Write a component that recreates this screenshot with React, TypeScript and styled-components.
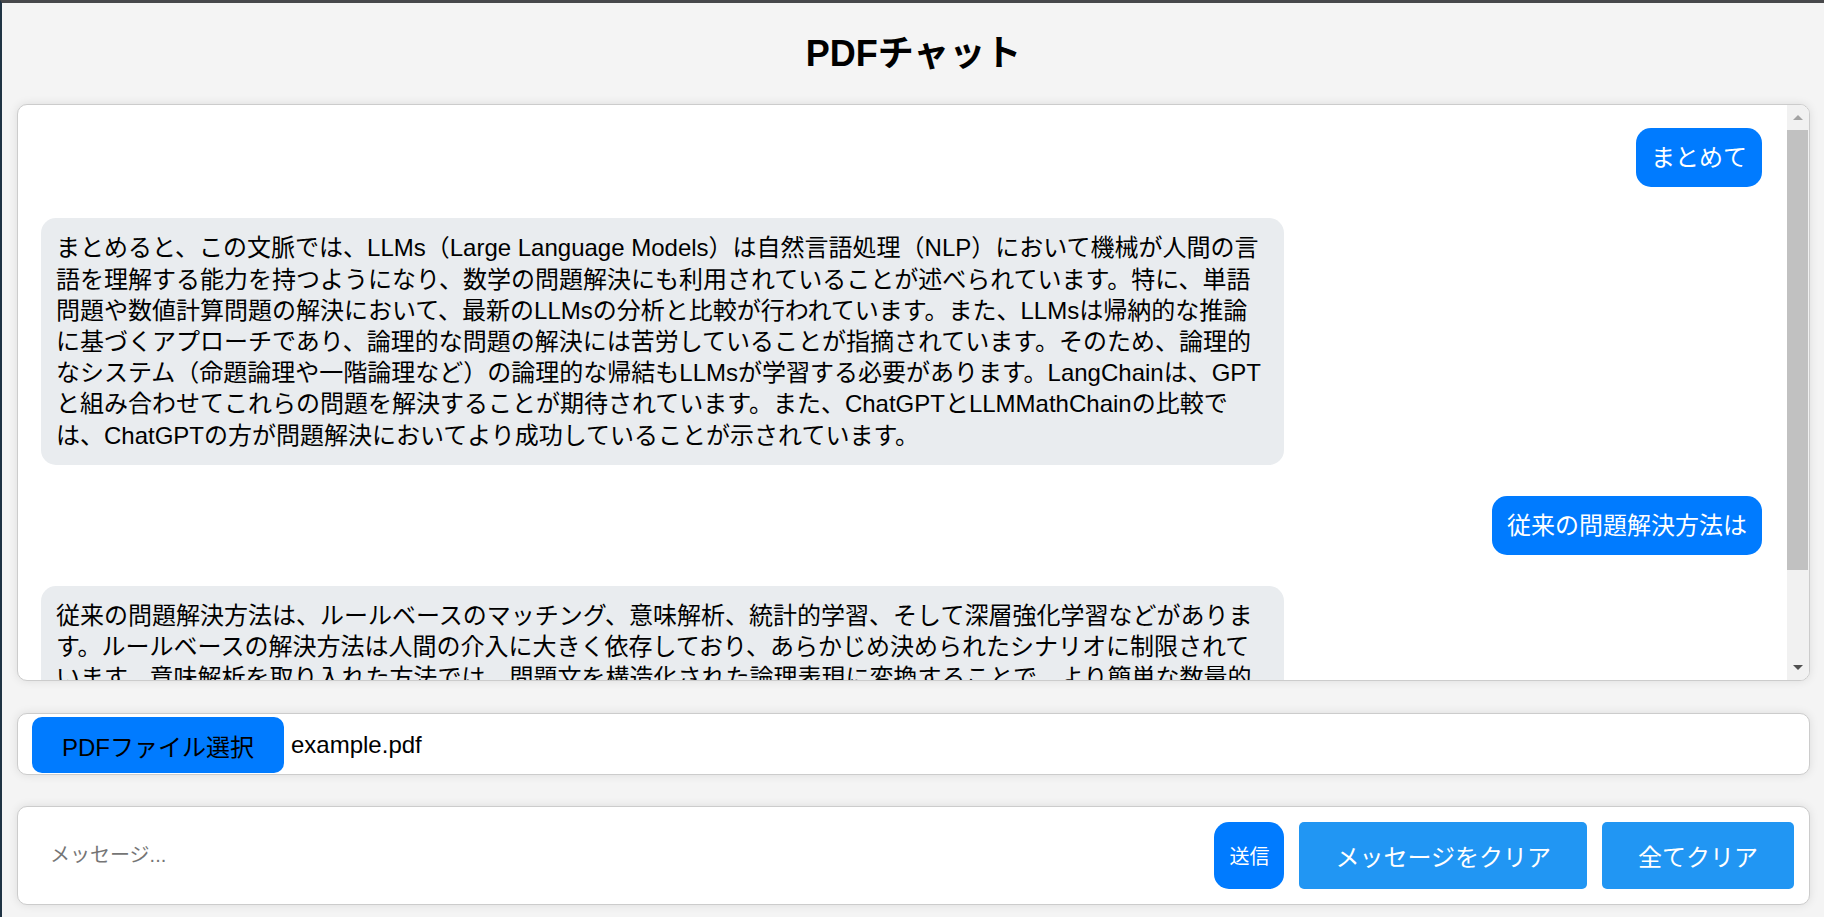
import React, { useState } from "react";
import styled, { createGlobalStyle } from "styled-components";

const GlobalStyle = createGlobalStyle`
  html, body {
    margin: 0;
    padding: 0;
  }
  body {
    font-family: "Liberation Sans", "Noto Sans CJK JP", sans-serif;
    background: #f4f4f4;
    overflow: hidden;
  }
  * {
    box-sizing: border-box;
  }
`;

const Page = styled.div`
  height: 917px;
  display: flex;
  flex-direction: column;
  background: #f4f4f4;
  border-top: 3px solid #47484b;
  border-left: 2px solid #1f3344;
  padding: 0 14px 0 15px;
`;

const Header = styled.h1`
  margin: 0;
  padding: 29px 0;
  text-align: center;
  font-size: 36px;
  line-height: 43.2px;
  font-weight: 700;
  color: #000;
`;

const Card = styled.div`
  background: #fff;
  border: 1px solid #cccccc;
  border-radius: 10px;
  box-shadow: 0 0 10px rgba(0, 0, 0, 0.1);
`;

const ChatBox = styled(Card)`
  height: 577px;
  flex: none;
  margin-bottom: 32px;
  display: flex;
  overflow: hidden;
`;

const Messages = styled.div`
  flex: 1;
  min-width: 0;
  overflow-y: auto;
  scrollbar-width: none;
  padding: 23px 25px 23px 23px;
  display: flex;
  flex-direction: column;
  gap: 31px;
`;

const ScrollTrack = styled.div`
  width: 22px;
  flex: none;
  background: #f1f1f1;
  display: flex;
  flex-direction: column;
`;

const ScrollButton = styled.div<{ $down?: boolean }>`
  height: 25px;
  flex: none;
  display: flex;
  align-items: center;
  justify-content: center;

  &::before {
    content: "";
    width: 0;
    height: 0;
    border-left: 5px solid transparent;
    border-right: 5px solid transparent;
    ${(p) =>
      p.$down
        ? "border-top: 5px solid #505050;"
        : "border-bottom: 5px solid #a3a3a3;"}
  }
`;

const ScrollThumb = styled.div`
  height: 440px;
  flex: none;
  margin-right: 1px;
  background: #c1c1c1;
`;

const ScrollSpacer = styled.div`
  flex: 1;
`;

const Row = styled.div<{ $user?: boolean }>`
  display: flex;
  flex: none;
  justify-content: ${(p) => (p.$user ? "flex-end" : "flex-start")};
`;

const Bubble = styled.div<{ $user?: boolean }>`
  max-width: 72.25%;
  padding: 14px 15px;
  border-radius: 15px;
  font-size: 24px;
  line-height: 1.3;
  background: ${(p) => (p.$user ? "#007bff" : "#e9ecef")};
  color: ${(p) => (p.$user ? "#fff" : "#000")};
  text-autospace: no-autospace;
  text-spacing-trim: space-all;
`;

const FileRow = styled(Card)`
  height: 62px;
  flex: none;
  margin-bottom: 31px;
  padding: 3px 14px 1px;
  display: flex;
  align-items: center;
  gap: 7px;
`;

const FileButton = styled.label`
  height: 56px;
  display: flex;
  align-items: center;
  padding: 0 30px;
  background: #007bff;
  color: #000;
  font-size: 24px;
  border-radius: 10px;
  cursor: pointer;
`;

const HiddenInput = styled.input`
  display: none;
`;

const FileName = styled.span`
  font-size: 24px;
  color: #000;
`;

const InputRow = styled(Card)`
  height: 99px;
  flex: none;
  padding: 15px;
  display: flex;
  align-items: stretch;
  gap: 15px;
`;

const MessageInput = styled.input`
  flex: 1;
  min-width: 0;
  border: none;
  outline: none;
  background: transparent;
  padding: 0 17px;
  font-family: inherit;
  font-size: 20px;
  color: #000;

  &::placeholder {
    color: #757575;
  }
`;

const Button = styled.button<{ $variant?: "send" | "clear" }>`
  border: none;
  cursor: pointer;
  font-family: inherit;
  color: #fff;
  background: ${(p) => (p.$variant === "send" ? "#007bff" : "#2196f3")};
  font-size: ${(p) => (p.$variant === "send" ? "20px" : "24px")};
  padding: ${(p) => (p.$variant === "send" ? "0 15px" : "0 36px")};
  border-radius: ${(p) => (p.$variant === "send" ? "15px" : "5px")};
  white-space: nowrap;
`;

type Msg = { user: boolean; text: string };

const initialMessages: Msg[] = [
  { user: true, text: "まとめて" },
  {
    user: false,
    text:
      "まとめると、この文脈では、LLMs（Large Language Models）は自然言語処理（NLP）において機械が人間の言語を理解する能力を持つようになり、数学の問題解決にも利用されていることが述べられています。特に、単語問題や数値計算問題の解決において、最新のLLMsの分析と比較が行われています。また、LLMsは帰納的な推論に基づくアプローチであり、論理的な問題の解決には苦労していることが指摘されています。そのため、論理的なシステム（命題論理や一階論理など）の論理的な帰結もLLMsが学習する必要があります。LangChainは、GPTと組み合わせてこれらの問題を解決することが期待されています。また、ChatGPTとLLMMathChainの比較では、ChatGPTの方が問題解決においてより成功していることが示されています。",
  },
  { user: true, text: "従来の問題解決方法は" },
  {
    user: false,
    text:
      "従来の問題解決方法は、ルールベースのマッチング、意味解析、統計的学習、そして深層強化学習などがあります。ルールベースの解決方法は人間の介入に大きく依存しており、あらかじめ決められたシナリオに制限されています。意味解析を取り入れた方法では、問題文を構造化された論理表現に変換することで、より簡単な数量的な問題に分解して解決します。統計的学習は、大量のデータからパターンを学習して問題を解決する方法であり、深層強化学習は、試行錯誤を通じて最適な解決策を学習する方法です。これらの方法はそれぞれ利点と欠点があり、問題の種類に応じて使い分けられています。",
  },
];

export default function App() {
  const [messages, setMessages] = useState<Msg[]>(initialMessages);
  const [input, setInput] = useState("");

  const send = () => {
    if (!input.trim()) return;
    setMessages((m) => [...m, { user: true, text: input }]);
    setInput("");
  };

  return (
    <>
      <GlobalStyle />
      <Page>
        <Header>PDFチャット</Header>
        <ChatBox>
          <Messages>
            {messages.map((m, i) => (
              <Row key={i} $user={m.user}>
                <Bubble $user={m.user}>{m.text}</Bubble>
              </Row>
            ))}
          </Messages>
          <ScrollTrack aria-hidden="true">
            <ScrollButton />
            <ScrollThumb />
            <ScrollSpacer />
            <ScrollButton $down />
          </ScrollTrack>
        </ChatBox>
        <FileRow>
          <FileButton htmlFor="pdf-file">PDFファイル選択</FileButton>
          <HiddenInput id="pdf-file" type="file" accept="application/pdf" />
          <FileName>example.pdf</FileName>
        </FileRow>
        <InputRow>
          <MessageInput
            placeholder="メッセージ..."
            value={input}
            onChange={(e) => setInput(e.target.value)}
          />
          <Button $variant="send" onClick={send}>
            送信
          </Button>
          <Button $variant="clear" onClick={() => setMessages([])}>
            メッセージをクリア
          </Button>
          <Button $variant="clear" onClick={() => setMessages([])}>
            全てクリア
          </Button>
        </InputRow>
      </Page>
    </>
  );
}
